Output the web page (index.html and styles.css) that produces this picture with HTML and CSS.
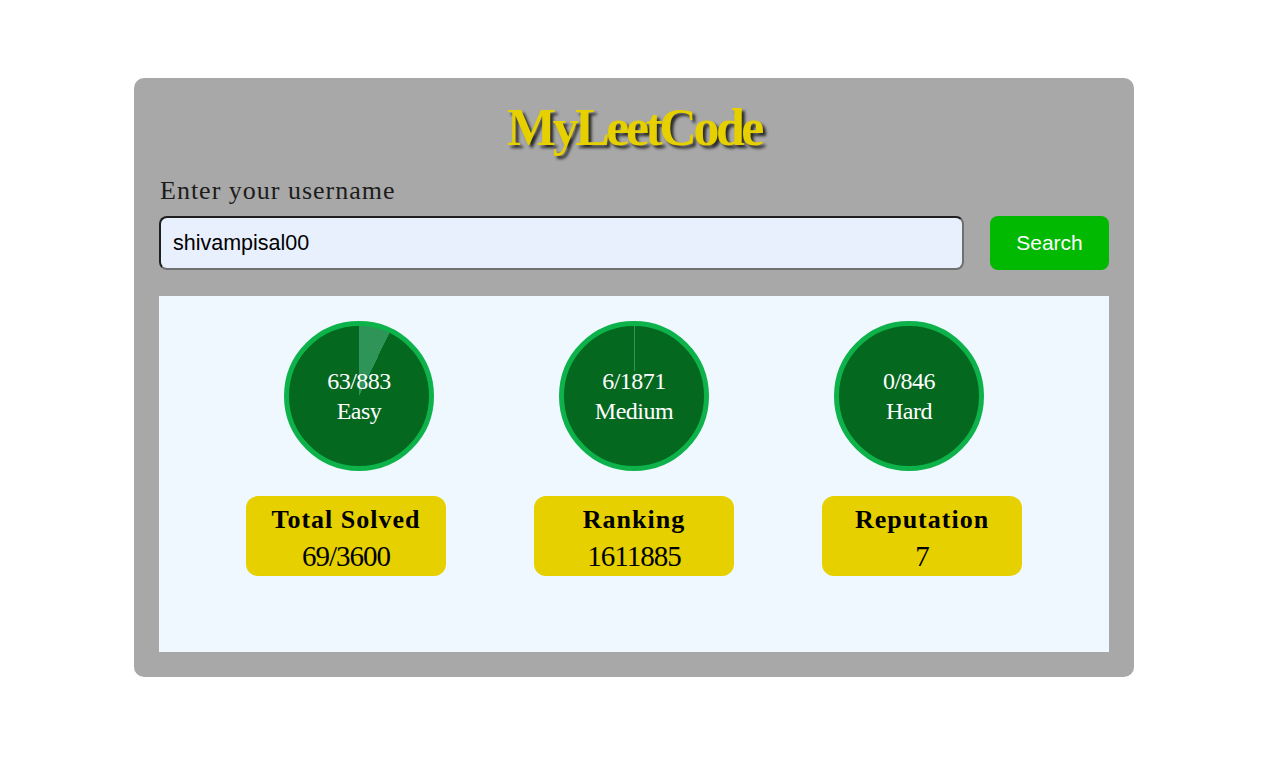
FILE: index.html
```html
<!DOCTYPE html>
<html lang="en">
<head>
<meta charset="utf-8">
<title>MyLeetCode</title>
<link rel="stylesheet" href="styles.css">
</head>
<body>
<div class="page">
  <main class="app">
    <h1 class="title">MyLeetCode</h1>
    <label class="label" for="user">Enter your username</label>
    <div class="search-row">
      <input id="user" class="input" type="text" value="shivampisal00">
      <button class="btn" type="button">Search</button>
    </div>
    <section class="stats">
      <div class="circles">
        <div class="circle" style="--p: 25.7deg"><div class="circle-text"><span>63/883</span><span>Easy</span></div></div>
        <div class="circle" style="--p: 1.15deg"><div class="circle-text"><span>6/1871</span><span>Medium</span></div></div>
        <div class="circle" style="--p: 0deg"><div class="circle-text"><span>0/846</span><span>Hard</span></div></div>
      </div>
      <div class="cards">
        <div class="card"><div class="card-label">Total Solved</div><div class="card-value">69/3600</div></div>
        <div class="card"><div class="card-label">Ranking</div><div class="card-value">1611885</div></div>
        <div class="card"><div class="card-label">Reputation</div><div class="card-value">7</div></div>
      </div>
    </section>
  </main>
</div>
</body>
</html>
```

FILE: styles.css
```css
* { box-sizing: border-box; }
html, body { margin: 0; padding: 0; background: #ffffff; }
body { font-family: "Liberation Serif", serif; }

.page {
  display: flex;
  justify-content: center;
  padding: 78px 13px 0 0;
}

.app {
  width: 1000px;
  background: #a8a8a8;
  border-radius: 10px;
  padding: 25px;
  display: flex;
  flex-direction: column;
}

.title {
  margin: 0;
  text-align: center;
  font-family: "Liberation Serif", serif;
  font-size: 52px;
  line-height: 50px;
  font-weight: bold;
  letter-spacing: -3.5px;
  color: #e6d000;
  text-shadow: 3px 3px 3px #2a2a2a;
}

.label {
  display: block;
  margin-top: 25px;
  margin-left: 1px;
  font-size: 26px;
  line-height: 26px;
  letter-spacing: 1px;
  color: #1c1c1c;
}

.search-row {
  display: flex;
  gap: 26px;
  margin-top: 12px;
}

.input {
  flex: 1;
  height: 54px;
  border: 2px solid;
  border-color: #1f1f1f #707070 #707070 #1f1f1f;
  border-radius: 8px;
  background: #e8f0fe;
  padding: 0 12px;
  font-family: "Liberation Sans", Arial, sans-serif;
  font-size: 21.5px;
  color: #000;
  outline: none;
}

.btn {
  width: 119px;
  height: 54px;
  border: none;
  border-radius: 8px;
  background: #00b900;
  color: #ffffff;
  font-family: "Liberation Sans", Arial, sans-serif;
  font-size: 21px;
  padding: 0;
}

.stats {
  margin-top: 26px;
  background: #f0f8ff;
  padding: 25px 0 76px;
  display: flex;
  flex-direction: column;
  align-items: center;
  gap: 25px;
}

.circles {
  display: flex;
  gap: 125px;
}

.circle {
  width: 150px;
  height: 150px;
  border-radius: 50%;
  border: 5px solid #0db24a;
  background: conic-gradient(#2e9458 0 var(--p), #05681f var(--p) 360deg);
  display: flex;
  align-items: center;
  justify-content: center;
}

.circle-text {
  display: flex;
  flex-direction: column;
  align-items: center;
  color: #ffffff;
  font-size: 24px;
  line-height: 30px;
  letter-spacing: -0.5px;
}

.cards {
  display: flex;
  gap: 88px;
}

.card {
  width: 200px;
  height: 80px;
  background: #e6d000;
  border-radius: 12px;
  padding-top: 9px;
  text-align: center;
  color: #000;
}

.card-label {
  font-size: 26px;
  line-height: 30px;
  font-weight: bold;
  letter-spacing: 1px;
}

.card-value {
  margin-top: 4px;
  font-size: 29px;
  line-height: 34px;
  letter-spacing: -1px;
}
```
